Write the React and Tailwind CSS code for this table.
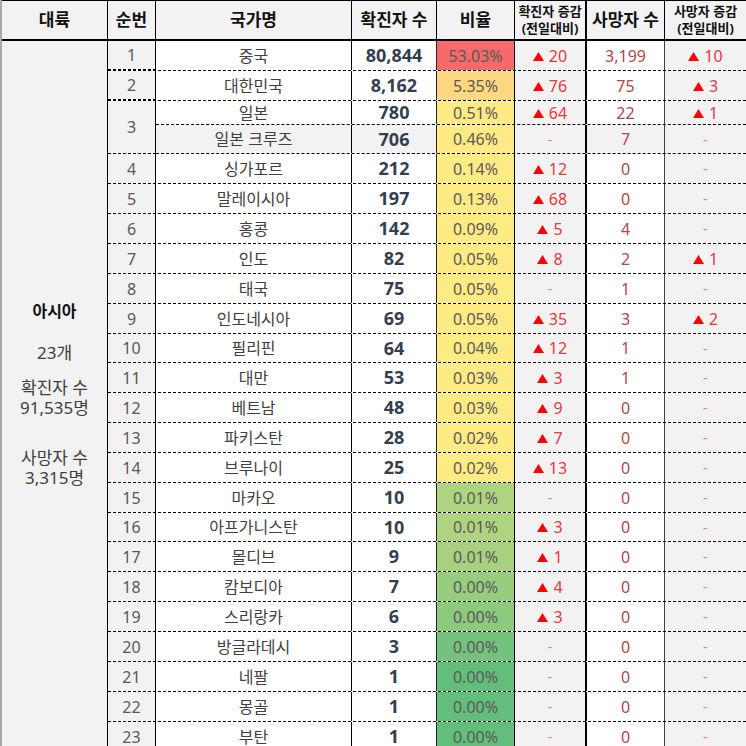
import React from 'react';

// row heights include the dashed bottom line
const rows = [
  { no: 1, name: '중국', cases: '80,844', rate: '53.03%', bg: 'bg-[#f8696b]', inc: '20', deaths: '3,199', dinc: '10', h: 'h-[30px]' },
  { no: 2, name: '대한민국', cases: '8,162', rate: '5.35%', bg: 'bg-[#fed880]', inc: '76', deaths: '75', dinc: '3', h: 'h-[30px]' },
  { no: 3, name: '일본', cases: '780', rate: '0.51%', bg: 'bg-[#ffea84]', inc: '64', deaths: '22', dinc: '1', h: 'h-[24px]' },
  { no: null, name: '일본 크루즈', cases: '706', rate: '0.46%', bg: 'bg-[#ffea84]', inc: null, deaths: '7', dinc: null, h: 'h-[29px]', gray: true },
  { no: 4, name: '싱가포르', cases: '212', rate: '0.14%', bg: 'bg-[#ffeb84]', inc: '12', deaths: '0', dinc: null, h: 'h-[30px]' },
  { no: 5, name: '말레이시아', cases: '197', rate: '0.13%', bg: 'bg-[#ffeb84]', inc: '68', deaths: '0', dinc: null, h: 'h-[30px]' },
  { no: 6, name: '홍콩', cases: '142', rate: '0.09%', bg: 'bg-[#ffeb84]', inc: '5', deaths: '4', dinc: null, h: 'h-[30px]' },
  { no: 7, name: '인도', cases: '82', rate: '0.05%', bg: 'bg-[#ffeb84]', inc: '8', deaths: '2', dinc: '1', h: 'h-[30px]' },
  { no: 8, name: '태국', cases: '75', rate: '0.05%', bg: 'bg-[#ffeb84]', inc: null, deaths: '1', dinc: null, h: 'h-[30px]' },
  { no: 9, name: '인도네시아', cases: '69', rate: '0.05%', bg: 'bg-[#ffeb84]', inc: '35', deaths: '3', dinc: '2', h: 'h-[30px]' },
  { no: 10, name: '필리핀', cases: '64', rate: '0.04%', bg: 'bg-[#ffeb84]', inc: '12', deaths: '1', dinc: null, h: 'h-[29px]' },
  { no: 11, name: '대만', cases: '53', rate: '0.03%', bg: 'bg-[#ffeb84]', inc: '3', deaths: '1', dinc: null, h: 'h-[30px]' },
  { no: 12, name: '베트남', cases: '48', rate: '0.03%', bg: 'bg-[#ffeb84]', inc: '9', deaths: '0', dinc: null, h: 'h-[30px]' },
  { no: 13, name: '파키스탄', cases: '28', rate: '0.02%', bg: 'bg-[#ffeb84]', inc: '7', deaths: '0', dinc: null, h: 'h-[30px]' },
  { no: 14, name: '브루나이', cases: '25', rate: '0.02%', bg: 'bg-[#ffeb84]', inc: '13', deaths: '0', dinc: null, h: 'h-[30px]' },
  { no: 15, name: '마카오', cases: '10', rate: '0.01%', bg: 'bg-[#afd47f]', inc: null, deaths: '0', dinc: null, h: 'h-[30px]' },
  { no: 16, name: '아프가니스탄', cases: '10', rate: '0.01%', bg: 'bg-[#afd47f]', inc: '3', deaths: '0', dinc: null, h: 'h-[29px]' },
  { no: 17, name: '몰디브', cases: '9', rate: '0.01%', bg: 'bg-[#a7d17f]', inc: '1', deaths: '0', dinc: null, h: 'h-[30px]' },
  { no: 18, name: '캄보디아', cases: '7', rate: '0.00%', bg: 'bg-[#96cd7e]', inc: '4', deaths: '0', dinc: null, h: 'h-[30px]' },
  { no: 19, name: '스리랑카', cases: '6', rate: '0.00%', bg: 'bg-[#8dca7d]', inc: '3', deaths: '0', dinc: null, h: 'h-[30px]' },
  { no: 20, name: '방글라데시', cases: '3', rate: '0.00%', bg: 'bg-[#74c37c]', inc: null, deaths: '0', dinc: null, h: 'h-[30px]' },
  { no: 21, name: '네팔', cases: '1', rate: '0.00%', bg: 'bg-[#63be7b]', inc: null, deaths: '0', dinc: null, h: 'h-[30px]' },
  { no: 22, name: '몽골', cases: '1', rate: '0.00%', bg: 'bg-[#63be7b]', inc: null, deaths: '0', dinc: null, h: 'h-[30px]' },
  { no: 23, name: '부탄', cases: '1', rate: '0.00%', bg: 'bg-[#63be7b]', inc: null, deaths: '0', dinc: null, h: 'h-[30px]' },
];

function Up({ value }) {
  if (!value) {
    return <span className="text-[15px] text-[#d98a8a]">-</span>;
  }
  return (
    <span className="flex items-center gap-[5px] text-[16px] text-[#e8383d]">
      <svg width="11" height="9" viewBox="0 0 11 9" className="mt-[1px]">
        <polygon points="5.5,0 11,9 0,9" fill="#ff0000" />
      </svg>
      {value}
    </span>
  );
}

function DataCells({ r }) {
  const g = r.gray ? 'bg-[#f2f2f2]' : 'bg-white';
  return (
    <>
      <div className={`w-[196px] shrink-0 flex items-center justify-center border-r border-black text-[16px] text-[#404040] ${g}`}>
        {r.name}
      </div>
      <div className={`w-[85px] shrink-0 flex items-center justify-center border-r border-[#222] text-[18px] font-bold text-[#333f4f] ${g}`}>
        {r.cases}
      </div>
      <div className={`w-[78px] shrink-0 flex items-center justify-center border-r border-black text-[16px] text-[#5a5a5a] ${r.bg}`}>
        {r.rate}
      </div>
      <div className="w-[72px] shrink-0 flex items-center justify-center border-r-2 border-black bg-[#f2f2f2]">
        <Up value={r.inc} />
      </div>
      <div className={`w-[78px] shrink-0 flex items-center justify-center border-r border-[#404040] text-[16px] text-[#b04848] ${g}`}>
        {r.deaths}
      </div>
      <div className="flex-1 flex items-center justify-center bg-[#f2f2f2]">
        <Up value={r.dinc} />
      </div>
    </>
  );
}

function Seq({ children, h }) {
  return (
    <div className={`w-[48px] shrink-0 ${h} flex items-center justify-center border-r border-black border-b border-b-black bg-[#f2f2f2] text-[16px] text-[#595959] [border-bottom-style:dashed]`}>
      {children}
    </div>
  );
}

export default function App() {
  const head = 'flex items-center justify-center border-r border-black text-[17px] font-bold text-[#111]';
  const sub = 'flex flex-col items-center justify-center border-r border-black text-[13px] leading-[17px] font-bold text-[#111]';

  return (
    <div className="w-[746px] h-[746px] overflow-hidden bg-white font-['Noto_Sans','Noto_Sans_CJK_KR',sans-serif]">
      <div className="border-l-2 border-[#a6a6a6]">
        {/* header */}
        <div className="flex h-[41px] border-t border-b-2 border-black bg-[#f2f2f2]">
          <div className={`w-[106px] shrink-0 ${head}`}>대륙</div>
          <div className={`w-[48px] shrink-0 ${head}`}>순번</div>
          <div className={`w-[196px] shrink-0 ${head}`}>국가명</div>
          <div className={`w-[85px] shrink-0 ${head}`}>확진자 수</div>
          <div className={`w-[78px] shrink-0 ${head}`}>비율</div>
          <div className={`w-[72px] shrink-0 ${sub} border-r-2`}>
            <span>확진자 증감</span>
            <span>(전일대비)</span>
          </div>
          <div className={`w-[78px] shrink-0 ${head} border-[#404040]`}>사망자 수</div>
          <div className="flex-1 flex flex-col items-center justify-center text-[13px] leading-[17px] font-bold text-[#111]">
            <span>사망자 증감</span>
            <span>(전일대비)</span>
          </div>
        </div>

        {/* body */}
        <div className="flex">
          <div className="w-[106px] shrink-0 flex flex-col items-center justify-center pb-[4px] border-r border-black bg-[#f2f2f2] text-[17px] leading-[20px] text-[#404040]">
            <div className="font-bold text-[16px] text-[#111]">아시아</div>
            <div className="mt-[22px]">23개</div>
            <div className="mt-[15px]">확진자 수</div>
            <div>91,535명</div>
            <div className="mt-[30px]">사망자 수</div>
            <div>3,315명</div>
          </div>

          <div className="flex-1 flex flex-col">
            {rows.slice(0, 2).map((r) => (
              <div key={r.name} className={`flex ${r.h} border-b border-dashed border-black`}>
                <Seq h="h-full">{r.no}</Seq>
                <DataCells r={r} />
              </div>
            ))}

            {/* 일본 + 일본 크루즈 share one 순번 cell */}
            <div className="flex">
              <Seq h="h-[53px]">3</Seq>
              <div className="flex-1 flex flex-col">
                {rows.slice(2, 4).map((r) => (
                  <div key={r.name} className={`flex ${r.h} border-b border-dashed border-black`}>
                    <DataCells r={r} />
                  </div>
                ))}
              </div>
            </div>

            {rows.slice(4).map((r) => (
              <div key={r.name} className={`flex ${r.h} border-b border-dashed border-black`}>
                <div className="w-[48px] shrink-0 flex items-center justify-center border-r border-black bg-[#f2f2f2] text-[16px] text-[#595959]">
                  {r.no}
                </div>
                <DataCells r={r} />
              </div>
            ))}
          </div>
        </div>
      </div>
    </div>
  );
}
